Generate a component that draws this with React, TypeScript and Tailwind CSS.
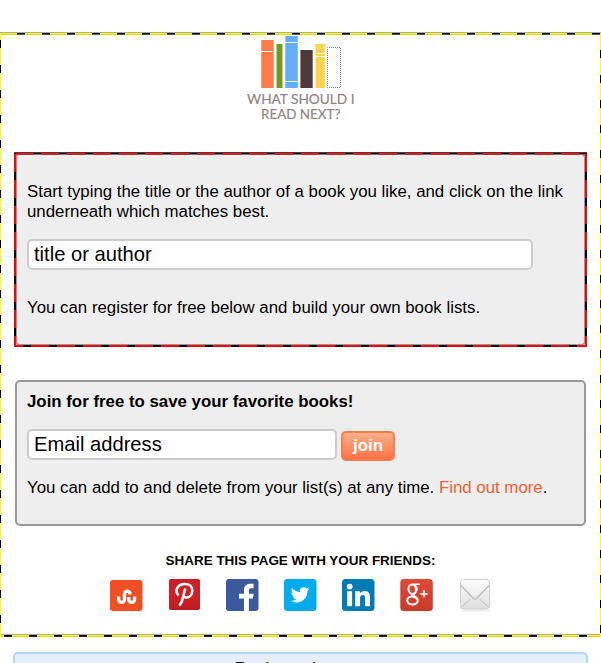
import React from "react";

const input =
  "rounded-[5px] border-2 border-[#ccc] bg-white px-[5px] text-[20.16px] leading-[26px] text-black placeholder:text-black placeholder:opacity-100 outline-none";

function Logo() {
  return (
    <svg width="112" height="90" viewBox="244 34 112 90" className="mr-px block">
      <rect x="261.3" y="40" width="12.4" height="48" fill="#ff7848" />
      <rect x="261" y="51" width="13" height="1" fill="#fff" />
      <rect x="276.5" y="44" width="6" height="44" fill="#76991f" />
      <rect x="285.3" y="36" width="12.5" height="52" fill="#64adf8" />
      <path d="M285 42.5h13M285 81.5h13" stroke="#fff" />
      <rect x="300.4" y="50" width="12.3" height="38" fill="#4e3938" />
      <rect x="315.5" y="44" width="9.3" height="44" fill="#fcd34b" />
      <path d="M315 53.5h10M315 56.5h10" stroke="#fff" />
      <rect x="327.5" y="47.5" width="13" height="40" fill="none" stroke="#8f8580" strokeDasharray="1 1" strokeDashoffset=".5" />
      <g fill="#8e8381" stroke="#8e8381" strokeWidth=".15" fontFamily="Lato, sans-serif" fontSize="13">
        <text x="247" y="104" textLength="107.5" lengthAdjust="spacingAndGlyphs">WHAT SHOULD I</text>
        <text x="261" y="119" textLength="79.5" lengthAdjust="spacingAndGlyphs">READ NEXT?</text>
      </g>
    </svg>
  );
}

function Stumble() {
  return (
    <svg width="33" height="32" viewBox="0 0 33 32">
      <rect x="0" y="1" width="32.5" height="31" rx="3" fill="#f04e23" />
      <path d="M8.700 17.500v3a2.900 2.900 0 0 0 5.800 0v-6a2.800 2.800 0 0 1 5.500 0v1M18.800 18v2.500a2.900 2.900 0 0 0 5.800 0v-3" fill="none" stroke="#fff" strokeWidth="3.300" />
    </svg>
  );
}

function Pinterest() {
  return (
    <svg width="31" height="32" viewBox="0 0 31 32">
      <defs>
        <linearGradient id="pin" x2="0" y2="1"><stop stopColor="#ca1f27" /><stop offset=".5" stopColor="#cf2229" /><stop offset="1" stopColor="#bb1c23" /></linearGradient>
      </defs>
      <rect width="31" height="31" rx="2" fill="url(#pin)" />
      <path d="M9.800 16.200C7.700 14.700 7 12 8 9.500C9.200 6.600 12.300 5 16 5c4.600 0 7.300 2.700 7.300 6.200c0 4.300-2.500 7.300-5.800 7.300c-1.900 0-3.100-.9-3.300-2M16.300 9.500l-3.500 13.200l-2.300 4" fill="none" stroke="#fff" strokeWidth="2.500" />
    </svg>
  );
}

function Facebook() {
  return (
    <svg width="33" height="32" viewBox="0 0 33 32">
      <rect width="32.500" height="32" rx="3" fill="#3b5a9b" />
      <path d="M18 32V19.500h-5v-4.700h5V11c0-4.200 2.500-6.300 6.300-6.300h3.200v4.600h-2.300c-1.700 0-2.300.7-2.300 2.300v3.200h4.700l-.7 4.700h-4V32z" fill="#fff" />
    </svg>
  );
}

function Twitter() {
  return (
    <svg width="33" height="32" viewBox="0 0 33 32">
      <rect width="32.500" height="32" rx="3.500" fill="#00aced" />
      <path transform="translate(6.700 6.500) scale(.78)" d="M23.950 4.570a10 10 0 0 1-2.820.77 4.960 4.960 0 0 0 2.160-2.720c-.95.550-2 .950-3.120 1.180a4.920 4.920 0 0 0-8.390 4.480C7.690 8.100 4.070 6.130 1.640 3.160a4.820 4.820 0 0 0-.67 2.480c0 1.710.87 3.210 2.190 4.100a4.900 4.900 0 0 1-2.230-.62v.06a4.920 4.920 0 0 0 3.950 4.830 5 5 0 0 1-2.210.08 4.940 4.940 0 0 0 4.600 3.420A9.870 9.870 0 0 1 0 19.540a14 14 0 0 0 7.550 2.210c9.050 0 14-7.500 14-13.980 0-.21 0-.42-.02-.63a9.940 9.940 0 0 0 2.420-2.570z" fill="#fff" />
    </svg>
  );
}

function Linkedin() {
  return (
    <svg width="33" height="32" viewBox="0 0 33 32">
      <rect width="32.500" height="32" rx="3.500" fill="#017bb6" />
      <circle cx="7.700" cy="7.600" r="2.900" fill="#fff" />
      <path d="M5.200 12.300h4.900V27.200H5.200zM13.200 12.300h4.700v2c.8-1.400 2.500-2.400 4.800-2.400c4.200 0 5.300 2.800 5.300 6.700v8.600h-4.900v-7.800c0-2-.4-3.500-2.400-3.500s-2.600 1.500-2.600 3.500v7.800h-4.900z" fill="#fff" />
    </svg>
  );
}

function GooglePlus() {
  return (
    <svg width="33" height="32" viewBox="0 0 33 32">
      <defs>
        <linearGradient id="gp" x2="0" y2="1"><stop stopColor="#df4b38" /><stop offset="1" stopColor="#c83a28" /></linearGradient>
      </defs>
      <rect x=".3" width="32.500" height="32" rx="3.500" fill="url(#gp)" />
      <g fill="none" stroke="#fff">
        <ellipse cx="12.300" cy="10.300" rx="3.700" ry="4.800" strokeWidth="2" transform="rotate(-12 12.300 10.300)" />
        <path d="M12.500 5.200h7.200M15 6c2.800 2.500 2.500 5.500.3 7.200c-1.700 1.500-2.300 2.300-.3 3.600" strokeWidth="1.500" />
        <ellipse cx="12.500" cy="21.500" rx="5.300" ry="4" strokeWidth="2" />
        <path d="M12.500 15.200c-1 1 0 2 1.500 2.800l3 2" strokeWidth="1.800" />
        <path d="M20.500 14.800h7M24 11.300v7" strokeWidth="1.800" />
      </g>
    </svg>
  );
}

function Mail() {
  return (
    <svg width="33" height="33" viewBox="0 0 33 33">
      <defs>
        <linearGradient id="mail" x2="0" y2="1"><stop stopColor="#fdfdfd" /><stop offset="1" stopColor="#dedede" /></linearGradient>
      </defs>
      <path d="M2 31.500h29" stroke="#eee" strokeWidth="2" />
      <rect x="1.500" y=".5" width="29" height="29.500" rx="3.500" fill="url(#mail)" stroke="#d2d2d2" />
      <path d="M2 28.500L11.500 20M30 28.500L20.500 20" stroke="#c5c5c5" fill="none" />
      <path d="M2 6.500L14.500 19.500q1.500 1.300 3 0L30 6.500" stroke="#bdbdbd" strokeWidth="1.400" fill="none" />
    </svg>
  );
}

function Dashes({ children }: { children: React.ReactNode }) {
  return <div className="pointer-events-none absolute inset-0">{children}</div>;
}

export default function App() {
  return (
    <div className="h-[663px] w-[601px] overflow-hidden bg-white pt-8 font-['Liberation_Sans',Arial,sans-serif] text-[16.83px] leading-5 text-black">
      <main className="relative h-[605px] px-[15px]">
        <Dashes>
          <i className="absolute inset-x-0 top-0 h-px bg-[#aaa]" />
          <i className="absolute inset-x-0 top-px h-px bg-[linear-gradient(90deg,#000_0_8px,#ff0_8px_25px)] bg-[position:17px_0] bg-[size:25px_1px]" />
          <i className="absolute inset-x-0 top-[2px] h-px bg-[linear-gradient(90deg,#555_0_8px,#dcdc00_8px_25px)] bg-[position:17px_0] bg-[size:25px_1px]" />
          <i className="absolute inset-x-0 bottom-[2px] h-px bg-[#aaa]" />
          <i className="absolute inset-x-0 bottom-px h-px bg-[linear-gradient(90deg,#000_0_8px,#ff0_8px_25px)] bg-[position:4px_0] bg-[size:25px_1px]" />
          <i className="absolute inset-x-0 bottom-0 h-px bg-[linear-gradient(90deg,#222_0_8px,#dcdc00_8px_25px)] bg-[position:4px_0] bg-[size:25px_1px]" />
          <i className="absolute bottom-0 left-0 top-px w-px bg-[linear-gradient(#000_0_8px,#ff0_8px_25px)] bg-[position:0_7px] bg-[size:1px_25px]" />
          <i className="absolute bottom-0 right-0 top-px w-px bg-[linear-gradient(#000_0_8px,#ff0_8px_25px)] bg-[position:0_17px] bg-[size:1px_25px]" />
        </Dashes>
        <header className="flex h-[121px] justify-center pt-[2px]">
          <Logo />
        </header>
        <section className="relative mb-[34px] h-[193px] rounded-[5px] border-2 border-[#999] bg-[#eee] px-[10px] pt-[27px]">
          <p className="whitespace-nowrap">
            Start typing the title or the author of a book you like, and click on the link
            <br />
            underneath which matches best.
          </p>
          <input className={`${input} mt-[17px] block h-[31px] w-[506px]`} placeholder="title or author" />
          <p className="mt-[28px]">You can register for free below and build your own book lists.</p>
          <div className="pointer-events-none absolute -inset-[3px]">
            <i className="absolute inset-x-0 top-0 h-px bg-[#5e3438]" />
            <i className="absolute inset-x-0 top-px h-px bg-[linear-gradient(90deg,#111_0_8px,#e51616_8px_26px)] bg-[position:19px_0] bg-[size:26px_1px]" />
            <i className="absolute inset-x-0 top-[2px] h-px bg-[linear-gradient(90deg,#777_0_8px,#c22c2c_8px_26px)] bg-[position:19px_0] bg-[size:26px_1px]" />
            <i className="absolute inset-x-0 bottom-0 h-[2px] bg-[linear-gradient(90deg,#000_0_8px,#f00_8px_26px)] bg-[position:9px_0] bg-[size:26px_2px]" />
            <i className="absolute bottom-0 left-0 top-px w-[2px] bg-[linear-gradient(#000_0_8px,#f00_8px_26px)] bg-[position:0_19px] bg-[size:2px_26px]" />
            <i className="absolute bottom-0 right-0 top-px w-[2px] bg-[linear-gradient(#000_0_8px,#f00_8px_26px)] bg-[position:0_19px] bg-[size:2px_26px]" />
          </div>
        </section>
        <section className="h-[146px] rounded-[5px] border-2 border-[#999] bg-[#eee] px-[10px] pt-[10px]">
          <h2 className="font-bold">Join for free to save your favorite books!</h2>
          <div className="mt-[17px] flex gap-[4px]">
            <input className={`${input} h-[31px] w-[310px]`} placeholder="Email address" />
            <button className="mt-[2px] h-[30px] w-[54px] rounded-[5px] border-2 border-[#ff7a4d] bg-linear-to-b from-[#ffb088] to-[#ff7042] text-[16.8px] font-bold leading-5 text-white">
              join
            </button>
          </div>
          <p className="mt-[17px] whitespace-nowrap">
            You can add to and delete from your list(s) at any time. <a className="text-[#f0602f]">Find out more</a>.
          </p>
        </section>
        <footer className="pt-[25px] text-center">
          <h3 className="text-[13.44px] font-bold leading-5">SHARE THIS PAGE WITH YOUR FRIENDS:</h3>
          <div className="mt-[8px] grid h-[33px] grid-cols-[59px_57px_58px_58px_58px_59px_33px] pl-[95px]">
            <Stumble />
            <Pinterest />
            <Facebook />
            <Twitter />
            <Linkedin />
            <GooglePlus />
            <Mail />
          </div>
        </footer>
      </main>
      <aside className="ml-[13px] mt-[15px] h-[60px] w-[575px] rounded-[5px] border-2 border-[#b0d6fb] bg-[#e4effb] text-center">
        <p className="mt-[5px]">Registered users:</p>
      </aside>
    </div>
  );
}
